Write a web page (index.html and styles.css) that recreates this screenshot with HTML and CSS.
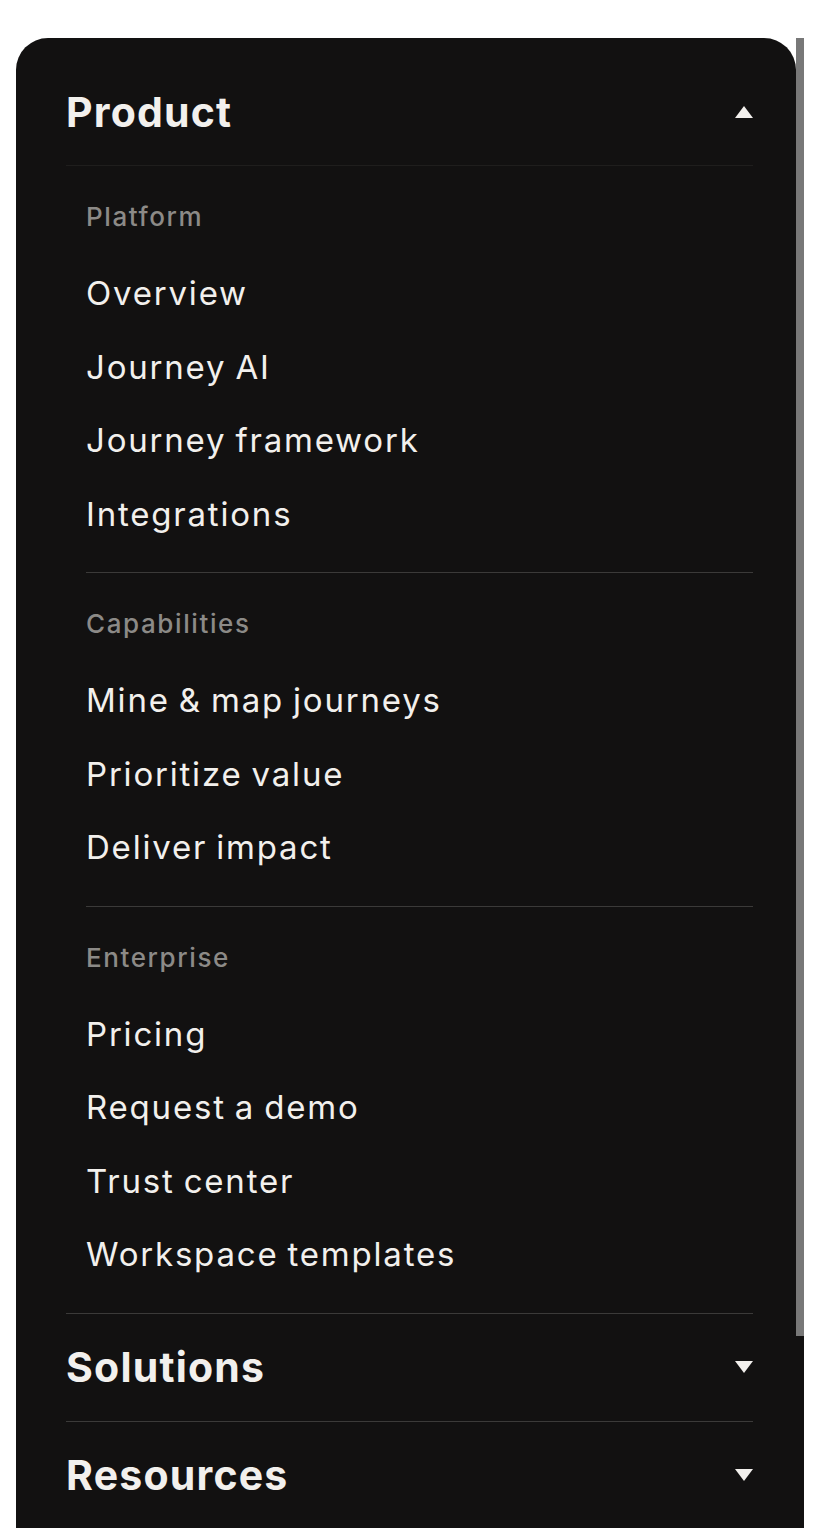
FILE: index.html
```html
<!DOCTYPE html>
<html lang="en">

<head>
	<meta charset="UTF-8">
	<meta name="viewport" content="width=device-width, initial-scale=1.0">
	<title>Menu</title>
	<link rel="stylesheet" href="styles.css">
</head>

<body>
	<div class="menu">
		<nav class="panel">
			<!-- open section -->
			<section class="nav-section is-open">
				<div class="nav-head">
					<span>Product</span>
					<svg class="caret" width="18" height="12" viewBox="0 0 18 12"><polygon points="9,0 18,12 0,12" /></svg>
				</div>
				<div class="nav-body">
					<div class="nav-group">
						<p class="nav-label">Platform</p>
						<ul class="nav-links">
							<li><a href="#">Overview</a></li>
							<li><a href="#">Journey AI</a></li>
							<li><a href="#">Journey framework</a></li>
							<li><a href="#">Integrations</a></li>
						</ul>
					</div>
					<div class="nav-group">
						<p class="nav-label">Capabilities</p>
						<ul class="nav-links">
							<li><a href="#">Mine &amp; map journeys</a></li>
							<li><a href="#">Prioritize value</a></li>
							<li><a href="#">Deliver impact</a></li>
						</ul>
					</div>
					<div class="nav-group">
						<p class="nav-label">Enterprise</p>
						<ul class="nav-links">
							<li><a href="#">Pricing</a></li>
							<li><a href="#">Request a demo</a></li>
							<li><a href="#">Trust center</a></li>
							<li><a href="#">Workspace templates</a></li>
						</ul>
					</div>
				</div>
			</section>
			<!-- closed sections -->
			<section class="nav-section">
				<div class="nav-head">
					<span>Solutions</span>
					<svg class="caret" width="18" height="12" viewBox="0 0 18 12"><polygon points="0,0 18,0 9,12" /></svg>
				</div>
			</section>
			<section class="nav-section">
				<div class="nav-head">
					<span>Resources</span>
					<svg class="caret" width="18" height="12" viewBox="0 0 18 12"><polygon points="0,0 18,0 9,12" /></svg>
				</div>
			</section>
		</nav>
		<!-- scrollbar -->
		<div class="rail">
			<div class="thumb"></div>
		</div>
	</div>
</body>

</html>
```

FILE: styles.css
```css
* {
	box-sizing: border-box
}

html,
body {
	margin: 0;
	background: #fff;
	overflow: hidden
}

.menu {
	display: flex;
	height: 1490px;
	margin: 38px 16px 0;
	overflow: hidden
}

.panel {
	flex: 1;
	background: #121111;
	border-radius: 32px 32px 0 0;
	padding: 20px 43px 0 50px;
	font-family: Inter, "Noto Sans", sans-serif;
	color: #f2f0ed
}

.rail {
	flex: none;
	width: 8px;
	background: #121111
}

.thumb {
	height: 1298px;
	background: #787878
}

.nav-section {
	border-bottom: 1px solid #3b3a39
}

.nav-head {
	display: flex;
	align-items: center;
	justify-content: space-between;
	height: 107px;
	font-size: 41px;
	font-weight: 700;
	letter-spacing: 1.2px
}

.caret {
	display: block;
	fill: #f2f0ed
}

.nav-body {
	border-top: 1px solid #1f1e1d;
	padding-left: 20px
}

.nav-group {
	padding: 36px 0 21px;
	border-bottom: 1px solid #3b3a39
}

.nav-group:last-child {
	border-bottom: 0
}

.nav-label {
	margin: 0 0 25px;
	font-size: 26px;
	line-height: 30px;
	font-weight: 500;
	letter-spacing: 1.6px;
	color: #8c8a87
}

.nav-links {
	list-style: none;
	margin: 0;
	padding: 0
}

.nav-links a {
	display: block;
	font-size: 33px;
	line-height: 73.5px;
	letter-spacing: 1.8px;
	word-spacing: -2px;
	color: #f2f0ed;
	text-decoration: none
}
```
